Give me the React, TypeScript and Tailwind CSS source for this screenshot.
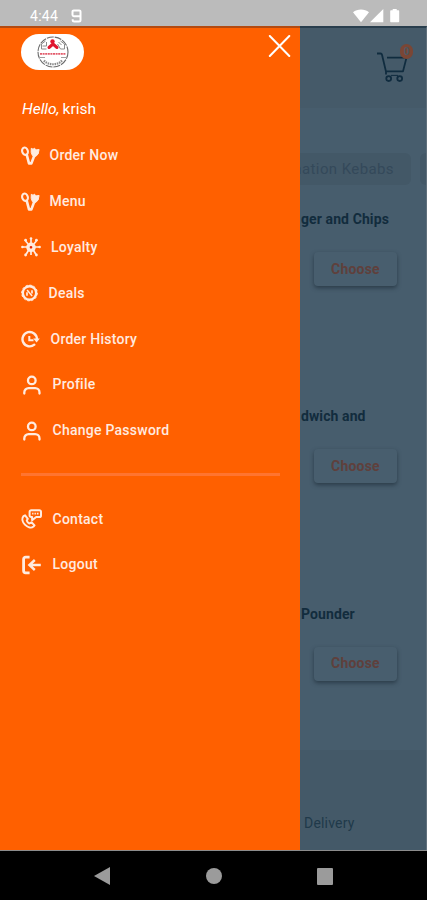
import type { ReactNode } from "react";

type MenuItem = {
  label: string;
  icon: ReactNode;
  gap: string;
};

const CutleryIcon = () => (
  <svg width="19" height="20" viewBox="0 0 19 20" fill="none" stroke="currentColor">
    <ellipse cx="4" cy="5.2" rx="2.8" ry="3.7" strokeWidth="2.1" transform="rotate(-18 4 5.2)" />
    <path d="M5.7 8.7 8 17.4h2.4l3.2-8.6" strokeWidth="2.6" strokeLinejoin="round" />
    <path
      d="M10.3 2.3 12 3.2l1.6-1 1.1 1.7 3.4-.4-1 4.6-2.5 2.4-3.2-.9-1.2-3.3z"
      fill="currentColor"
      strokeWidth="1"
    />
  </svg>
);

const LoyaltyIcon = () => (
  <svg width="20" height="20" viewBox="0 0 20 20" fill="none" stroke="currentColor">
    <circle cx="10" cy="10.3" r="3.1" strokeWidth="3.4" />
    <path
      d="M10 6V2.2M10 14v4M6.5 10H2M13.5 10H18M7.2 7 4.5 4M12.8 7l2.7-3M7.4 13.5 5 17.5M12.6 13.5l2.4 4"
      strokeWidth="1.7"
    />
    <g fill="currentColor" stroke="none">
      <circle cx="10" cy="1.6" r="1.3" />
      <circle cx="4.6" cy="3.2" r="1.4" />
      <circle cx="15.4" cy="3.2" r="1.4" />
      <circle cx="1.4" cy="10" r="1.3" />
      <circle cx="18.6" cy="10" r="1.3" />
      <circle cx="4.6" cy="18" r="1.4" />
      <circle cx="15.4" cy="18" r="1.4" />
    </g>
    <circle cx="10" cy="10.3" r="1" fill="#e01818" stroke="none" />
  </svg>
);

const DealsIcon = () => (
  <svg width="17" height="18" viewBox="0 0 17 18" fill="none" stroke="currentColor">
    <circle cx="8.5" cy="9" r="6.7" strokeWidth="2.4" />
    <circle cx="8.5" cy="9" r="7.9" strokeWidth="0.9" strokeDasharray="2.4 1.7" />
    <path d="m6.1 6 5 6" strokeWidth="1.5" />
    <path d="M6 8.3v3.5M11 6.2v3.3" strokeWidth="1.7" />
  </svg>
);

const HistoryIcon = () => (
  <svg width="19" height="18" viewBox="0 0 19 18" fill="none" stroke="currentColor">
    <path d="M13.3 14.7A7.2 7.2 0 1 1 15.9 9" strokeWidth="2.4" strokeLinecap="round" />
    <path d="M12.2 8.5h6.6l-3.2 4z" fill="currentColor" stroke="none" />
    <path d="M8.3 6v4.3h4.2" strokeWidth="2" />
  </svg>
);

const ProfileIcon = () => (
  <svg width="21" height="20" viewBox="0 0 21 20" fill="none" stroke="currentColor" strokeWidth="2.3">
    <circle cx="10.8" cy="5.4" r="3.8" />
    <path d="M3.3 18.6v-1.2a4.3 4.3 0 0 1 4.3-4.3h6.6a4.3 4.3 0 0 1 4.3 4.3v1.2" strokeLinecap="round" />
  </svg>
);

const ContactIcon = () => (
  <svg width="21" height="20" viewBox="0 0 21 20" fill="none" stroke="currentColor" strokeWidth="2">
    <path
      d="M2.5 7.2c-2.1 2.6-.8 6.2 1.4 8.4 2.3 2.3 6 4.1 8.6 1.9l1-1.1-3-3.1-2.1 1.2c-1.2-.5-2.2-1.7-2.6-2.9l1-1.8-2.7-3.4z"
      strokeLinejoin="round"
    />
    <path
      d="M10.2 1.2h8.2a1.6 1.6 0 0 1 1.6 1.6v3.6A1.6 1.6 0 0 1 18.4 8h-3.2l-4.1 3.2V8h-.9a1.6 1.6 0 0 1-1.6-1.6V2.8a1.6 1.6 0 0 1 1.6-1.6z"
      strokeLinejoin="round"
    />
    <path d="M11.1 4.7h1.4m1 0h1.4m1 0h1.6" strokeWidth="1.8" />
  </svg>
);

const LogoutIcon = () => (
  <svg width="21" height="20" viewBox="0 0 21 20" fill="none" stroke="currentColor">
    <path d="M8.6 2.2H4.6a2 2 0 0 0-2 2v11.6a2 2 0 0 0 2 2h4" strokeWidth="2.8" />
    <path d="M19.8 10H9m4.8-5L8.4 10l5.4 5" strokeWidth="2.4" />
  </svg>
);

const MENU: MenuItem[] = [
  { label: "Order Now", icon: <CutleryIcon />, gap: "gap-[9.5px]" },
  { label: "Menu", icon: <CutleryIcon />, gap: "gap-[9.5px]" },
  { label: "Loyalty", icon: <LoyaltyIcon />, gap: "gap-[10px]" },
  { label: "Deals", icon: <DealsIcon />, gap: "gap-[10.5px]" },
  { label: "Order History", icon: <HistoryIcon />, gap: "gap-[10.5px]" },
  { label: "Profile", icon: <ProfileIcon />, gap: "gap-[10.5px]" },
  { label: "Change Password", icon: <ProfileIcon />, gap: "gap-[10.5px]" },
];

const FOOTER_MENU: MenuItem[] = [
  { label: "Contact", icon: <ContactIcon />, gap: "gap-[10.5px]" },
  { label: "Logout", icon: <LogoutIcon />, gap: "gap-[10.5px]" },
];

const PRODUCTS = ["ger and Chips", "dwich and", "Pounder"];

function MenuList({ items }: { items: MenuItem[] }) {
  return (
    <ul>
      {items.map((item) => (
        <li key={item.label} className={`flex h-[45.8px] items-center ${item.gap}`}>
          {item.icon}
          <span className="text-[14px] font-medium tracking-[0.25px]">{item.label}</span>
        </li>
      ))}
    </ul>
  );
}

function StatusBar() {
  return (
    <header className="flex h-[26px] shrink-0 items-center justify-between bg-[#bbbbbb] pt-[5px] pr-[27px] pl-[30px] text-white">
      <div className="flex items-center gap-[13px]">
        <span className="text-[14px] leading-none tracking-[0.3px]">4:44</span>
        <svg width="11" height="14" viewBox="0 0 11 14" fill="none" stroke="currentColor" strokeWidth="2">
          <path d="M9.5 7.2H2.8A1.3 1.3 0 0 1 1.5 6V2.7a1.3 1.3 0 0 1 1.3-1.3h5.4a1.3 1.3 0 0 1 1.3 1.3v8.2a1.5 1.5 0 0 1-1.5 1.5H3.2a1.5 1.5 0 0 1-1.5-1.5v-.7" />
        </svg>
      </div>
      <svg width="47" height="14" viewBox="0 0 47 14" fill="currentColor">
        <path d="M0 3.2C4.3-.3 11.7-.3 16 3.2L8 13.2z" />
        <path d="M17 13.2 30.3 0v13.2z" />
        <path d="M39.7 0h4v1.3h1.5c.6 0 1 .4 1 1v9.9c0 .6-.4 1-1 1h-7c-.6 0-1-.4-1-1V2.3c0-.6.4-1 1-1h1.5z" />
      </svg>
    </header>
  );
}

function Logo() {
  return (
    <div className="flex h-9 w-[63px] items-center justify-center rounded-full bg-white">
      <svg width="34" height="32" viewBox="0 0 34 32" fill="none">
        <circle cx="17" cy="16" r="15" stroke="#6b6b6b" strokeWidth="1.1" strokeDasharray="7 1" />
        <path d="M5.5 13V8l4-3m-3 5h4V6m-5 7h5M28.5 13V8l-4-3m4 8h-4l-3-5m1-2 3 3" stroke="#8c8c8c" strokeWidth="1" />
        <path d="M8 24.5c4 5 14 5 18 0" stroke="#8c8c8c" strokeWidth="2.2" strokeDasharray="1.5 0.8" />
        <path d="M3 21.5h6m16 0h6" stroke="#a0a0a0" strokeWidth="1" />
        <path d="m13 11.5 4-3.5 4 3.5" stroke="#df1730" strokeWidth="3" strokeLinecap="round" />
        <circle cx="16.5" cy="5.5" r="2.2" fill="#df1730" />
        <path d="M4 17.8h26" stroke="#e35b6b" strokeWidth="1.8" strokeDasharray="2 0.6" />
      </svg>
    </div>
  );
}

function Drawer() {
  return (
    <nav className="w-[300px] shrink-0 border-t-2 border-[#b34a10] bg-[#ff6000] pr-5 pl-[21px] text-[#ffebe0]">
      <div className="flex h-[53px] items-start justify-between pt-1.5">
        <Logo />
        <button aria-label="Close menu" className="-mr-[12px] pt-px text-white">
          <svg width="24" height="22" viewBox="0 0 24 22" stroke="currentColor" strokeWidth="2" strokeLinecap="round">
            <path d="m1.8 1 19.5 20M21.3 1 1.8 21" />
          </svg>
        </button>
      </div>
      <p className="flex h-[52px] items-center gap-[3px] pt-[5px] pl-px text-[15.5px] text-white">
        <em>Hello,</em> krish
      </p>
      <MenuList items={MENU} />
      <hr className="mt-[19.7px] mb-[20px] border-t-3 border-[#ff7430]" />
      <MenuList items={FOOTER_MENU} />
    </nav>
  );
}

function CartIcon() {
  return (
    <div className="relative ml-[77px] w-[31px] text-[#102c3f]">
      <svg width="31" height="32" viewBox="0 0 31 32" fill="none" stroke="currentColor" strokeWidth="1.8">
        <path d="M0 1.5h3.5q1.2 0 1.5 1.2L9 19.6v3M10 5.6h19.5L26 19.4H9" strokeLinejoin="round" />
        <circle cx="11.7" cy="26.6" r="2.4" />
        <circle cx="22.7" cy="26.6" r="2.4" />
        <path d="M14 23.4h7" strokeWidth="1" />
      </svg>
      <span className="absolute -top-[8px] left-[23px] flex h-[15px] w-[13px] items-center justify-center rounded-full bg-[#7a4635] text-[10px] font-bold text-[#4b5964]">
        0
      </span>
    </div>
  );
}

function Page() {
  return (
    <main className="flex min-w-0 flex-1 flex-col overflow-hidden border-t-2 border-r border-t-[#293e4d] border-r-[#60707c] bg-[#475d6d] whitespace-nowrap text-[#122c3d]">
      <div className="h-20 bg-[#455a69] pt-6">
        <CartIcon />
      </div>
      <div className="mt-[45px] flex h-8 gap-[9px] text-[#34495a]">
        <div className="flex w-[111px] shrink-0 items-center justify-end rounded-r-md bg-[#435867] pr-[17px] text-[15px] tracking-[0.4px]">
          nation Kebabs
        </div>
        <div className="w-4 shrink-0 rounded-l-md bg-[#435867]" />
      </div>
      <div className="mt-[22px]">
        {PRODUCTS.map((product) => (
          <section key={product} className="h-[197.3px] pl-px">
            <h2 className="text-[14px] leading-6 font-bold tracking-[0.1px]">{product}</h2>
            <button className="mt-[21px] ml-[13px] h-[34px] w-[83px] rounded-[4px] bg-[#485e6e] text-[14px] font-bold tracking-[0.2px] text-[#5f403c] shadow-[0_2px_4px_#2b3c49]">
              Choose
            </button>
          </section>
        ))}
      </div>
      <div className="-mt-[49px] flex-1 bg-[#445968] pt-[63px] pl-1 text-[14px] tracking-[0.2px] text-[#20394a]">
        Delivery
      </div>
    </main>
  );
}

function NavigationBar() {
  return (
    <footer className="flex h-[49px] shrink-0 items-center bg-black pl-[94px] text-[#9b9b9b]">
      <svg width="240" height="20" viewBox="0 0 240 20" fill="currentColor">
        <path d="M16 1v18L0 10z" />
        <circle cx="120" cy="10" r="8" />
        <rect x="223" y="2" width="16" height="17" rx="1" />
      </svg>
    </footer>
  );
}

export default function App() {
  return (
    <div className="flex h-[900px] w-[427px] flex-col overflow-hidden bg-black font-[Roboto,sans-serif]">
      <StatusBar />
      <div className="flex h-[825px] shrink-0 border-b border-[#8c8c8c]">
        <Drawer />
        <Page />
      </div>
      <NavigationBar />
    </div>
  );
}
